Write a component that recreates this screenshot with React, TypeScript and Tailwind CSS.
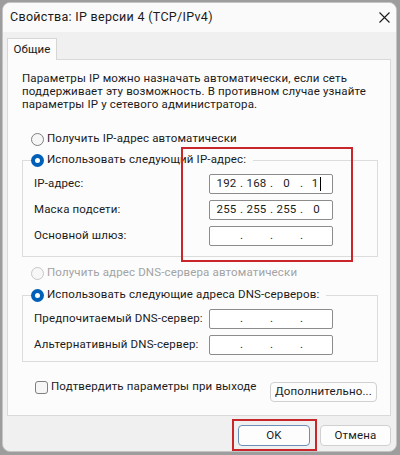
import React from "react";

const font = { fontFamily: 'Roboto, "Liberation Sans", sans-serif' };

function Radio({ checked, disabled }: { checked?: boolean; disabled?: boolean }) {
  if (checked) {
    return (
      <span className="w-[13px] h-[13px] rounded-full bg-[#005fb8] flex items-center justify-center shrink-0">
        <span className="w-[5px] h-[5px] rounded-full bg-white" />
      </span>
    );
  }
  return (
    <span
      className={`w-[13px] h-[13px] rounded-full border shrink-0 ${
        disabled ? "border-[#c6c6c6] bg-[#f7f7f7]" : "border-[#7f7f7f] bg-[#f6f6f6]"
      }`}
    />
  );
}

function IpField({ parts, cursor }: { parts?: string[]; cursor?: boolean }) {
  const segs = parts ?? ["", "", "", ""];
  return (
    <div className="w-[124px] h-[20px] border border-[#8c8c8c] rounded-[2px] bg-white flex items-center pl-[4px] text-[11.5px] leading-none text-[#1b1b1b]">
      {segs.map((s, i) => (
        <React.Fragment key={i}>
          <span className="w-[25px] flex justify-center items-center">
            {s}
            {cursor && i === 3 && <span className="inline-block w-px h-[14px] bg-black ml-[2px]" />}
          </span>
          {i < 3 && <span className="w-[5px] flex justify-center">.</span>}
        </React.Fragment>
      ))}
    </div>
  );
}

function Row({ label, children }: { label: string; children: React.ReactNode }) {
  return (
    <div className="flex items-center h-[20px]">
      <span className="w-[175px] whitespace-nowrap">{label}</span>
      {children}
    </div>
  );
}

export default function App() {
  return (
    <div
      className="relative w-[400px] h-[455px] bg-[#9d9d9d] text-[#1b1b1b] text-[11.5px] tracking-[0.15px] overflow-hidden"
      style={font}
    >
      <div className="ml-[2px] mt-[2px] w-[395px] h-[450px] rounded-[8px] border border-[#c4c4c4] bg-[#f0f0f0] overflow-hidden flex flex-col">
        {/* title bar */}
        <div className="h-[29px] bg-[#fafafa] flex items-center justify-between pl-[7px] pr-[6px]">
          <span className="text-[12.5px] tracking-[0.3px]">Свойства: IP версии 4 (TCP/IPv4)</span>
          <svg width="11" height="11" viewBox="0 0 11 11">
            <path d="M0.5 0.5 L10.5 10.5 M10.5 0.5 L0.5 10.5" stroke="#1b1b1b" strokeWidth="1.1" />
          </svg>
        </div>

        <div className="pt-[6px] pl-[4px] pr-[5px]">
          {/* tab */}
          <div className="relative z-10 -mb-px w-[50px] h-[22px] bg-[#fcfcfc] border border-b-0 border-[#d6d6d6] flex items-center justify-center">
            Общие
          </div>

          {/* panel */}
          <div className="h-[357px] border border-[#d9d9d9] bg-[#fcfcfc] pt-[12px] pl-[14px] pr-[12px]">
            <p className="leading-[13px] whitespace-nowrap">
              Параметры IP можно назначать автоматически, если сеть
              <br />
              поддерживает эту возможность. В противном случае узнайте
              <br />
              параметры IP у сетевого администратора.
            </p>

            <div className="mt-[21px] ml-[9px] h-[14px] flex items-center gap-[3px]">
              <Radio />
              <span>Получить IP-адрес автоматически</span>
            </div>

            <fieldset className="mt-[7px] border border-[#dcdcdc] px-[11px] pt-[7px] pb-[10px]">
              <legend className="ml-[-3px] pr-[7px] h-[14px] flex items-center gap-[3px]">
                <Radio checked />
                <span>Использовать следующий IP-адрес:</span>
              </legend>
              <div className="flex flex-col gap-[6px]">
                <Row label="IP-адрес:">
                  <IpField parts={["192", "168", "0", "1"]} cursor />
                </Row>
                <Row label="Маска подсети:">
                  <IpField parts={["255", "255", "255", "0"]} />
                </Row>
                <Row label="Основной шлюз:">
                  <IpField />
                </Row>
              </div>
            </fieldset>

            <div className="mt-[9px] ml-[9px] h-[14px] flex items-center gap-[3px] text-[#a3a3a3]">
              <Radio disabled />
              <span>Получить адрес DNS-сервера автоматически</span>
            </div>

            <fieldset className="mt-[8px] border border-[#dcdcdc] px-[11px] pt-[7px] pb-[6px]">
              <legend className="ml-[-3px] pr-[7px] h-[14px] flex items-center gap-[3px]">
                <Radio checked />
                <span>Использовать следующие адреса DNS-серверов:</span>
              </legend>
              <div className="flex flex-col gap-[6px]">
                <Row label="Предпочитаемый DNS-сервер:">
                  <IpField />
                </Row>
                <Row label="Альтернативный DNS-сервер:">
                  <IpField />
                </Row>
              </div>
            </fieldset>

            <div className="mt-[18px] flex items-start justify-between">
              <div className="ml-[13px] h-[14px] flex items-center gap-[3px]">
                <span className="w-[13px] h-[13px] rounded-[3px] border border-[#7f7f7f] bg-[#f6f6f6]" />
                <span>Подтвердить параметры при выходе</span>
              </div>
              <button className="mt-[2px] mr-[1px] w-[107px] h-[20px] rounded-[4px] border border-[#d0d0d0] bg-[#fdfdfd]">
                Дополнительно...
              </button>
            </div>
          </div>

          {/* dialog buttons */}
          <div className="mt-[9px] flex justify-end gap-[10px]">
            <button className="w-[72px] h-[21px] rounded-[4px] border border-[#6b8fb8] bg-[#fdfdfd]">OK</button>
            <button className="w-[71px] h-[21px] rounded-[4px] border border-[#d0d0d0] bg-[#fdfdfd]">Отмена</button>
          </div>
        </div>
      </div>

      {/* red annotation frames */}
      <div className="absolute left-[181px] top-[147px] w-[172px] h-[115px] border-2 border-[#c9262c]" />
      <div className="absolute left-[232px] top-[419px] w-[85px] h-[32px] border-2 border-[#c9262c]" />
    </div>
  );
}
